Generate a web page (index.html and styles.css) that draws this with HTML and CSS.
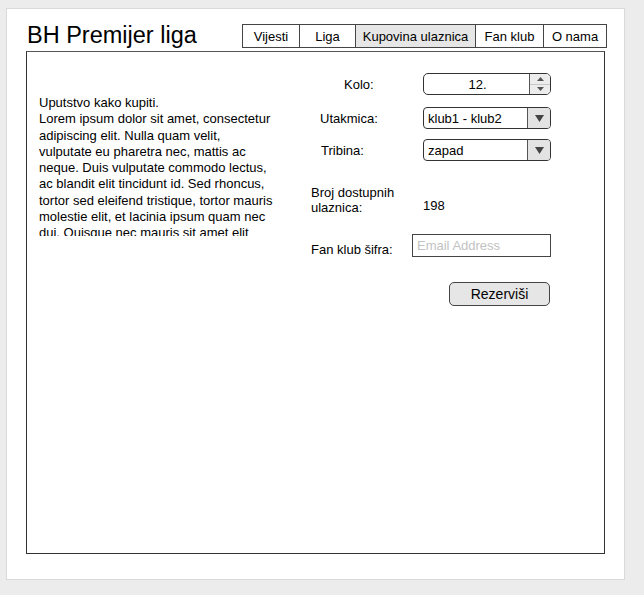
FILE: index.html
```html
<!DOCTYPE html>
<html lang="bs">
<head>
<meta charset="utf-8">
<title>BH Premijer liga</title>
<link rel="stylesheet" href="styles.css">
</head>
<body>
<div class="card">
  <header class="header">
    <h1 class="title">BH Premijer liga</h1>
    <nav class="tabs">
      <a class="tab tab-vijesti">Vijesti</a>
      <a class="tab tab-liga">Liga</a>
      <a class="tab tab-kupovina tab-active">Kupovina ulaznica</a>
      <a class="tab tab-fan">Fan klub</a>
      <a class="tab tab-onama">O nama</a>
    </nav>
  </header>
  <main class="panel">
    <div class="intro">
      <p class="intro-text">Uputstvo kako kupiti.<br>Lorem ipsum dolor sit amet, consectetur<br>adipiscing elit. Nulla quam velit,<br>vulputate eu pharetra nec, mattis ac<br>neque. Duis vulputate commodo lectus,<br>ac blandit elit tincidunt id. Sed rhoncus,<br>tortor sed eleifend tristique, tortor mauris<br>molestie elit, et lacinia ipsum quam nec<br>dui. Quisque nec mauris sit amet elit</p>
    </div>
    <form class="form">
      <div class="row row-kolo">
        <span class="label label-kolo">Kolo:</span>
        <div class="spinner">
          <span class="spinner-value">12.</span>
          <span class="spinner-buttons">
            <span class="spin spin-up"><svg class="spin-icon" width="7" height="4" viewBox="0 0 7 4"><polygon points="0,4 7,4 3.5,0" fill="#555"/></svg></span>
            <span class="spin spin-down"><svg class="spin-icon" width="7" height="4" viewBox="0 0 7 4"><polygon points="0,0 7,0 3.5,4" fill="#555"/></svg></span>
          </span>
        </div>
      </div>
      <div class="row row-utakmica">
        <span class="label label-utakmica">Utakmica:</span>
        <div class="select">
          <span class="select-value">klub1 - klub2</span>
          <span class="select-arrow"><svg width="9" height="7" viewBox="0 0 9 7"><polygon points="0,0 9,0 4.5,7" fill="#444"/></svg></span>
        </div>
      </div>
      <div class="row row-tribina">
        <span class="label label-tribina">Tribina:</span>
        <div class="select">
          <span class="select-value">zapad</span>
          <span class="select-arrow"><svg width="9" height="7" viewBox="0 0 9 7"><polygon points="0,0 9,0 4.5,7" fill="#444"/></svg></span>
        </div>
      </div>
      <div class="row row-broj">
        <span class="label label-broj">Broj dostupnih<br>ulaznica:</span>
        <span class="value">198</span>
      </div>
      <div class="row row-sifra">
        <span class="label label-sifra">Fan klub šifra:</span>
        <input class="text-input" type="text" placeholder="Email Address">
      </div>
      <div class="row row-button">
        <button class="button" type="button">Rezerviši</button>
      </div>
    </form>
  </main>
</div>
</body>
</html>
```

FILE: styles.css
```css
* {
  box-sizing: border-box;
}

html, body {
  margin: 0;
  padding: 0;
}

body {
  background: #ececec;
  font-family: "Liberation Sans", Arial, sans-serif;
  font-size: 13px;
  color: #000;
}

.card {
  width: 619px;
  height: 572px;
  margin: 8px 0 0 6px;
  padding: 15px 19px 25px 19px;
  background: #fff;
  border: 1px solid #d9d9d9;
}

.header {
  display: flex;
  align-items: flex-start;
  height: 24px;
}

.title {
  margin: 0 0 0 1px;
  font-size: 23.5px;
  font-weight: normal;
  line-height: 22px;
  white-space: nowrap;
}

.tabs {
  display: flex;
  margin-left: auto;
  margin-right: -2px;
}

.tab {
  display: flex;
  align-items: center;
  justify-content: center;
  height: 24px;
  border: 1px solid #444;
  margin-left: -1px;
  font-size: 13px;
  background: #fff;
  white-space: nowrap;
}

.tab-vijesti { width: 58px; margin-left: 0; }
.tab-liga { width: 57px; }
.tab-kupovina { width: 121px; }
.tab-fan { width: 69px; }
.tab-onama { width: 64px; }

.tab-active {
  background: #e6e6e6;
}

.panel {
  display: flex;
  align-items: flex-start;
  height: 503px;
  margin-top: 3px;
  padding: 21px 0 0 12px;
  border: 1px solid #333;
  border-top: 1px solid #555;
}

.intro {
  width: 242px;
  height: 141px;
  margin-top: 22px;
  overflow: hidden;
}

.intro-text {
  margin: 0;
  line-height: 16.25px;
  white-space: nowrap;
}

.form {
  display: flex;
  flex-direction: column;
  width: 240px;
  margin-left: 30px;
}

.row {
  display: flex;
  align-items: center;
}

.label {
  flex: 0 0 112px;
  line-height: 15px;
}

.label-kolo { padding-left: 33px; }
.label-utakmica { padding-left: 9px; }
.label-tribina { padding-left: 10px; }

.row-utakmica { margin-top: 12px; }
.row-tribina { margin-top: 10px; }

.row-broj {
  margin-top: 24px;
  align-items: flex-start;
}

.value {
  padding-top: 13px;
  line-height: 15px;
}

.row-sifra {
  margin-top: 19px;
  align-items: flex-end;
}

.label-sifra {
  flex-basis: 101px;
}

.row-button {
  margin-top: 25px;
  justify-content: flex-end;
  padding-right: 1px;
}

.spinner {
  display: flex;
  width: 128px;
  height: 22px;
  border: 1px solid #333;
  border-radius: 5px;
  overflow: hidden;
}

.spinner-value {
  flex: 1;
  display: flex;
  align-items: center;
  justify-content: center;
  padding-left: 2px;
}

.spinner-buttons {
  display: flex;
  flex-direction: column;
  width: 21px;
  border-left: 1px solid #555;
  background: #ececec;
}

.spin {
  flex: 1;
  display: flex;
  align-items: center;
  justify-content: center;
}

.spin-up {
  border-bottom: 1px solid #c8c8c8;
}

.spin-icon {
  display: block;
}

.select {
  display: flex;
  width: 128px;
  height: 22px;
  border: 1px solid #333;
  border-radius: 4px;
  overflow: hidden;
}

.select-value {
  flex: 1;
  display: flex;
  align-items: center;
  padding-left: 4px;
}

.select-arrow {
  display: flex;
  align-items: center;
  justify-content: center;
  width: 23px;
  border-left: 1px solid #555;
  background: #e3e3e3;
}

.text-input {
  width: 139px;
  height: 23px;
  margin: 0;
  padding: 0 0 0 4px;
  border: 1px solid #444;
  border-radius: 0;
  font-family: "Liberation Sans", Arial, sans-serif;
  font-size: 13px;
  color: #000;
  outline: none;
}

.text-input::placeholder {
  color: #c2c2c2;
}

.button {
  width: 101px;
  height: 24px;
  margin: 0;
  padding: 0;
  border: 1px solid #444;
  border-radius: 5px;
  background: #e6e6e6;
  font-family: "Liberation Sans", Arial, sans-serif;
  font-size: 14px;
  color: #000;
}
```
